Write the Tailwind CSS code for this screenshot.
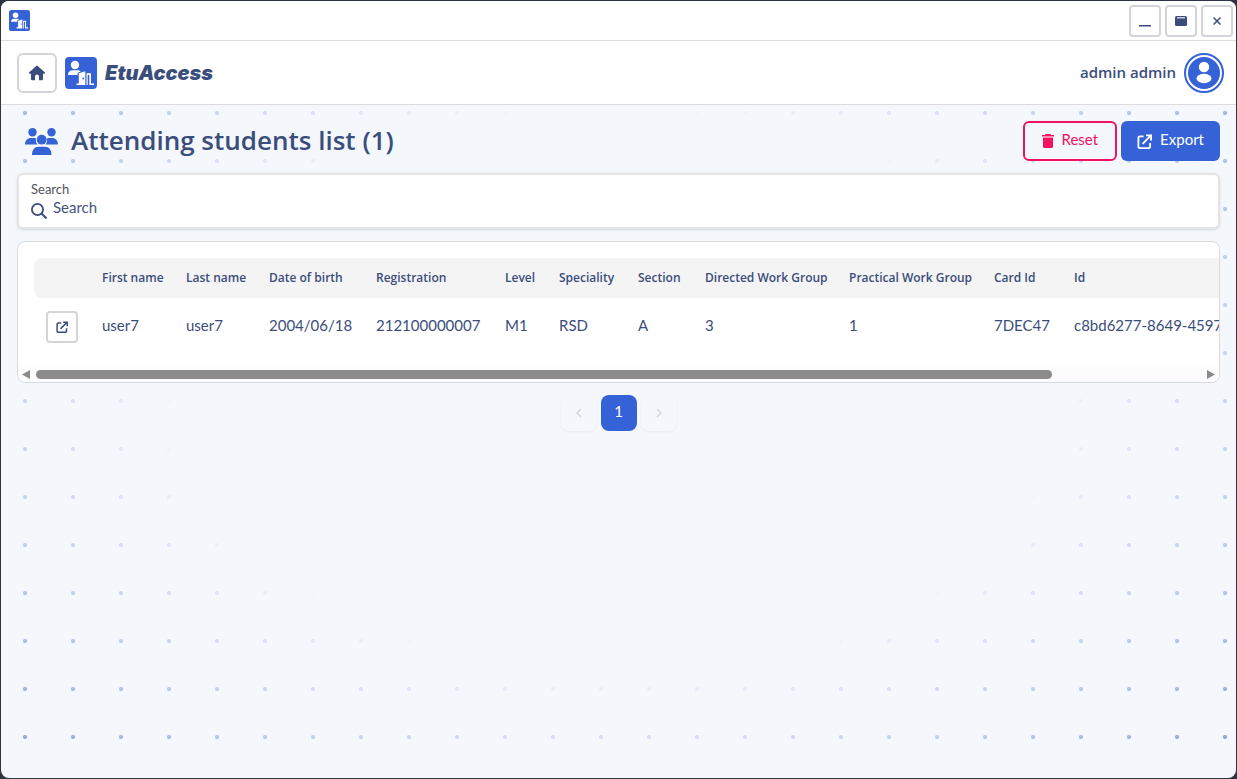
<!DOCTYPE html>
<html lang="en">
<head>
<meta charset="utf-8">
<meta name="viewport" content="width=device-width, initial-scale=1">
<title>EtuAccess</title>
<script src="https://cdn.jsdelivr.net/npm/@tailwindcss/browser@4"></script>
</head>
<body class="flex h-screen bg-[#2f3443] p-px font-['Lato','Open_Sans',sans-serif] text-[#3b4d7c]">
<svg class="hidden" aria-hidden="true">
  <symbol id="logo" viewBox="0 0 32 32">
    <rect width="32" height="32" rx="4" fill="#3662d8"/>
    <g fill="#fff">
      <circle cx="10" cy="8" r="4.200"/>
      <path d="M3 18c0-3.200 2-4.700 5-4.700h4.500c1.500 0 2.500.5 3.200 1.200l-3 1.200V18z"/>
      <path d="M13.800 16.200 20.300 14.300V28H11.500v-1.600h2.300zM21.500 16.200H26V26.400h3V28h-4.700V18h-1.600V28h-1.200z"/>
    </g>
    <circle cx="18.300" cy="21.500" r=".9" fill="#3662d8"/>
  </symbol>
  <symbol id="open" viewBox="0 0 16 16">
    <path d="M7 2.500H3A1.500 1.500 0 0 0 1.500 4v9.500A1.500 1.500 0 0 0 3 15h9.500a1.500 1.500 0 0 0 1.500-1.500V9.500M6 10.500 14 2.200M9.500 1.500H15V7" fill="none" stroke="currentColor" stroke-width="2"/>
  </symbol>
</svg>
<div class="relative isolate flex min-w-0 grow flex-col overflow-hidden rounded-lg bg-[#f4f7fc]">
  <div class="absolute inset-0 -z-10 bg-[radial-gradient(circle,#3662d8_1.7px,transparent_2.4px)] bg-size-[48px_48px] bg-position-[0px_-8px] mask-[radial-gradient(ellipse_farthest-corner_at_center,transparent_50%,rgba(0,0,0,0.6)_100%)]"></div>

  <div class="flex h-10 shrink-0 items-center justify-between border-b border-[#dcdcde] bg-white pr-[3px] pl-2">
    <svg class="size-[21px]"><use href="#logo"/></svg>
    <div class="flex gap-1">
      <button aria-label="Minimize" class="flex size-8 items-center justify-center rounded border-2 border-[#d4d4da] bg-white"><svg class="size-3" viewBox="0 0 12 12"><path d="M0 10h12v1.500H0z" fill="#3b4d7c"/></svg></button>
      <button aria-label="Maximize" class="flex size-8 items-center justify-center rounded border-2 border-[#d4d4da] bg-white"><svg class="size-3" viewBox="0 0 12 12"><rect y="1" width="12" height="10" rx="1.500" fill="#3b4d7c"/><path d="M2 2h8v1.500H2z" fill="#c9cedb"/></svg></button>
      <button aria-label="Close" class="flex size-8 items-center justify-center rounded border-2 border-[#d4d4da] bg-white"><svg class="size-2" viewBox="0 0 8 8"><path d="m.500.500 7 7M7.500.500l-7 7" stroke="#3b4d7c" stroke-width="1.500"/></svg></button>
    </div>
  </div>

  <header class="flex h-16 shrink-0 items-center border-b border-[#dcdcde] bg-white pr-3 pl-4">
    <button aria-label="Home" class="flex size-10 items-center justify-center rounded-md border-2 border-[#d4d4da] bg-white">
      <svg class="size-4" viewBox="0 0 16 16"><path d="M7.300.9a1 1 0 0 1 1.400 0L15.700 7.300c.6.600.3 1.400-.4 1.400H14V14a1.200 1.200 0 0 1-1.200 1.200H10V11.500a2 2 0 0 0-4 0v3.700H3.200A1.200 1.200 0 0 1 2 14V8.700H.7c-.7 0-1-.8-.4-1.400z" fill="#3b4d7c"/></svg>
    </button>
    <svg class="ml-2 size-8"><use href="#logo"/></svg>
    <span class="ml-2 font-['Inter',sans-serif] text-xl leading-8 font-black italic">EtuAccess</span>
    <span class="ml-auto pb-px font-['Open_Sans',sans-serif] text-[15px] font-semibold">admin admin</span>
    <svg class="ml-2 size-10" viewBox="0 0 40 40"><circle cx="20" cy="20" r="19" fill="#fff" stroke="#3662d8" stroke-width="2"/><circle cx="20" cy="20" r="16" fill="#3662d8"/><circle cx="20" cy="14" r="5.200" fill="#fff"/><ellipse cx="20" cy="25.500" rx="7.500" ry="4.700" fill="#fff"/></svg>
  </header>

  <main class="flex flex-col gap-3 p-4">
    <div class="flex items-center">
      <svg class="ml-2 h-[27px] w-[33px]" viewBox="0 0 33 27"><g fill="#3662d8"><circle cx="7.500" cy="4.200" r="4.200"/><circle cx="26.500" cy="4.200" r="4.200"/><path d="M0 16.500C0 12.500 2.500 10 6 10h3.500l1.700.5C10.500 13 11 15 12.500 16.500zM33 16.500C33 12.500 30.500 10 27 10h-3.500l-1.700.5c.7 2.500.2 4.500-1.300 6zM7 27c0-5 2.500-8.200 6.500-8.200h6.500c4 0 6.500 3.200 6.500 8.200z"/><circle cx="16.700" cy="11.700" r="4.900"/></g></svg>
      <h1 class="ml-[13px] pb-[2px] font-['Open_Sans',sans-serif] text-[26px] leading-9 font-semibold">Attending students list (1)</h1>
      <div class="ml-auto flex gap-1">
        <button class="flex h-10 items-center gap-2 rounded-md border-2 border-[#f31260] px-[17px] text-[15px] text-[#f31260]">
          <svg class="h-[14px] w-3" viewBox="0 0 12 14"><path d="M3.500 0h5l.5 1h3v1.500H0V1h3z" fill="#f31260"/><path d="M1 2.500h10V5H1z" fill="#f98cb0"/><path d="M1 4h10v8.500a1.500 1.500 0 0 1-1.500 1.500h-7A1.500 1.500 0 0 1 1 12.500z" fill="#f31260"/></svg>
          <span class="pb-1">Reset</span></button>
        <button class="flex h-10 items-center gap-2 rounded-md bg-[#3662d8] px-4 text-[15px] text-white"><svg class="size-[15px]"><use href="#open"/></svg><span class="pb-1">Export</span></button>
      </div>
    </div>

    <div class="flex h-14 flex-col justify-center rounded-md border-2 border-[#e4e4e7] bg-white px-3 pb-[2px] shadow-sm">
      <label for="search" class="text-[13px] leading-4 text-[#52525b]">Search</label>
      <div class="flex h-[22px] items-end gap-[6px]">
        <svg class="size-4" viewBox="0 0 16 16"><circle cx="6.500" cy="6.500" r="5.600" fill="none" stroke="currentColor" stroke-width="1.800"/><path d="m10.500 10.500 5 5" stroke="currentColor" stroke-width="2"/></svg>
        <input id="search" type="text" placeholder="Search" class="h-5 min-w-0 grow self-start bg-transparent text-[15px] outline-none placeholder:text-[#46557f]">
      </div>
    </div>

    <section class="overflow-hidden rounded-lg border border-[#d9dadd] bg-white">
      <div class="h-[125px] overflow-hidden p-4">
        <table class="w-[1352px] table-fixed text-left">
          <colgroup><col class="w-14"><col class="w-[84px]"><col class="w-[83px]"><col class="w-[107px]"><col class="w-[129px]"><col class="w-[54px]"><col class="w-[79px]"><col class="w-[67px]"><col class="w-[144px]"><col class="w-[145px]"><col class="w-20"><col></colgroup>
          <thead class="h-10 font-['Open_Sans',sans-serif] text-xs whitespace-nowrap">
            <tr>
              <th scope="col" aria-label="Open" class="rounded-l-lg bg-[#f4f4f5]"></th>
              <th scope="col" class="bg-[#f4f4f5] px-3 font-semibold">First name</th>
              <th scope="col" class="bg-[#f4f4f5] px-3 font-semibold">Last name</th>
              <th scope="col" class="bg-[#f4f4f5] px-3 font-semibold">Date of birth</th>
              <th scope="col" class="bg-[#f4f4f5] px-3 font-semibold">Registration</th>
              <th scope="col" class="bg-[#f4f4f5] px-3 font-semibold">Level</th>
              <th scope="col" class="bg-[#f4f4f5] px-3 font-semibold">Speciality</th>
              <th scope="col" class="bg-[#f4f4f5] px-3 font-semibold">Section</th>
              <th scope="col" class="bg-[#f4f4f5] px-3 font-semibold">Directed Work Group</th>
              <th scope="col" class="bg-[#f4f4f5] px-3 font-semibold">Practical Work Group</th>
              <th scope="col" class="bg-[#f4f4f5] px-3 font-semibold">Card Id</th>
              <th scope="col" class="rounded-r-lg bg-[#f4f4f5] px-3 font-semibold">Id</th>
            </tr>
          </thead>
          <tbody class="text-[15px] whitespace-nowrap">
            <tr class="h-14">
              <td class="px-3"><button aria-label="Open student" class="mt-[2px] flex size-8 items-center justify-center rounded border-2 border-[#d4d4da]"><svg class="size-3"><use href="#open"/></svg></button></td>
              <td class="px-3 pb-[2px]">user7</td>
              <td class="px-3 pb-[2px]">user7</td>
              <td class="px-3 pb-[2px]">2004/06/18</td>
              <td class="px-3 pb-[2px]">212100000007</td>
              <td class="px-3 pb-[2px]">M1</td>
              <td class="px-3 pb-[2px]">RSD</td>
              <td class="px-3 pb-[2px]">A</td>
              <td class="px-3 pb-[2px]">3</td>
              <td class="px-3 pb-[2px]">1</td>
              <td class="px-3 pb-[2px]">7DEC47</td>
              <td class="px-3 pb-[2px]">c8bd6277-8649-4597</td>
            </tr>
          </tbody>
        </table>
      </div>
      <div class="flex h-[15px] items-center gap-[6px] bg-[#fcfcfc] px-1" aria-hidden="true">
        <svg class="h-[9px] w-2" viewBox="0 0 8 9"><path d="M8 0v9L0 4.500z" fill="#8b8b8b"/></svg>
        <div class="grow"><div class="h-[9px] w-[87.2%] rounded-full bg-[#8b8b8b]"></div></div>
        <svg class="h-[9px] w-2" viewBox="0 0 8 9"><path d="M0 0v9l8-4.500z" fill="#8b8b8b"/></svg>
      </div>
    </section>

    <nav aria-label="Pagination" class="flex justify-center gap-1">
      <button aria-label="Previous page" class="flex size-9 items-center justify-center rounded-lg bg-[#f4f7fc] shadow-xs"><svg class="size-3" viewBox="0 0 12 12"><path d="M8 2 4 6l4 4" fill="none" stroke="#d3d6dc" stroke-width="1.500"/></svg></button>
      <button class="size-9 rounded-lg bg-[#3662d8] pb-1 text-[15px] text-white">1</button>
      <button aria-label="Next page" class="flex size-9 items-center justify-center rounded-lg bg-[#f4f7fc] shadow-xs"><svg class="size-3" viewBox="0 0 12 12"><path d="m4 2 4 4-4 4" fill="none" stroke="#d3d6dc" stroke-width="1.500"/></svg></button>
    </nav>
  </main>
</div>
</body>
</html>
